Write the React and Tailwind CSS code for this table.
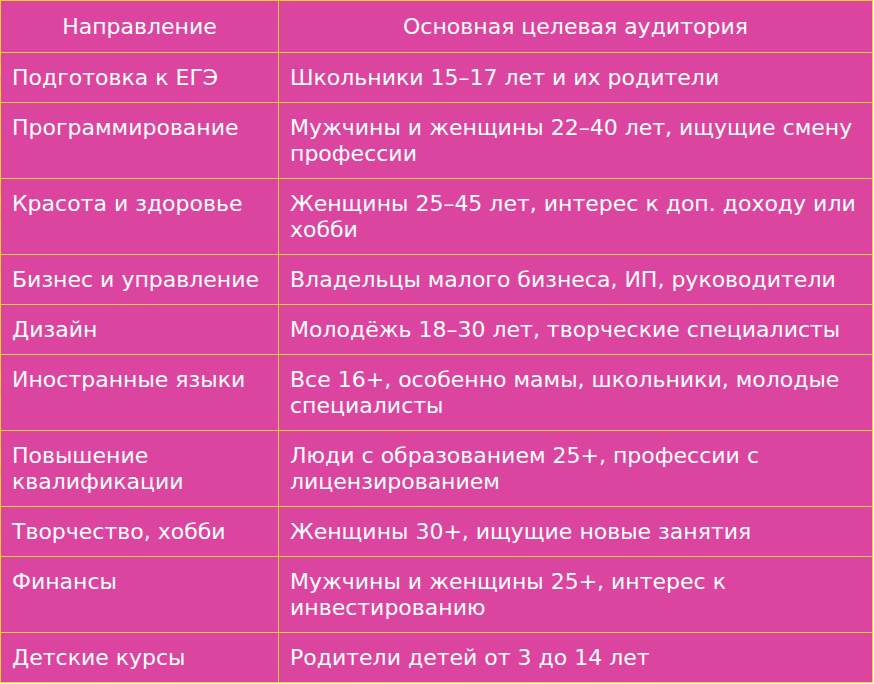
const rows = [
  ["Подготовка к ЕГЭ", ["Школьники 15–17 лет и их родители"]],
  ["Программирование", ["Мужчины и женщины 22–40 лет, ищущие смену", "профессии"]],
  ["Красота и здоровье", ["Женщины 25–45 лет, интерес к доп. доходу или", "хобби"]],
  ["Бизнес и управление", ["Владельцы малого бизнеса, ИП, руководители"]],
  ["Дизайн", ["Молодёжь 18–30 лет, творческие специалисты"]],
  ["Иностранные языки", ["Все 16+, особенно мамы, школьники, молодые", "специалисты"]],
  [["Повышение", "квалификации"], ["Люди с образованием 25+, профессии с", "лицензированием"]],
  ["Творчество, хобби", ["Женщины 30+, ищущие новые занятия"]],
  ["Финансы", ["Мужчины и женщины 25+, интерес к", "инвестированию"]],
  ["Детские курсы", ["Родители детей от 3 до 14 лет"]],
];

function Lines({ value }) {
  const list = Array.isArray(value) ? value : [value];
  return list.map((line, i) => (
    <span key={i} className="block whitespace-nowrap">
      {line}
    </span>
  ));
}

const cell = "border border-[#fbd01e] px-[11px]";

export default function App() {
  return (
    <div className="w-[874px] h-[684px] bg-white">
      <table
        className="w-[873px] border-collapse table-fixed text-white text-[22px] leading-[26px]"
        style={{ fontFamily: '"DejaVu Sans", sans-serif' }}
      >
        <colgroup>
          <col className="w-[278px]" />
          <col />
        </colgroup>
        <thead>
          <tr className="bg-[#db45a0]">
            <th className={`${cell} h-[52px] font-normal text-center`}>
              Направление
            </th>
            <th className={`${cell} h-[52px] font-normal text-center`}>
              Основная целевая аудитория
            </th>
          </tr>
        </thead>
        <tbody>
          {rows.map(([dir, aud], i) => (
            <tr key={i} className="bg-[#db45a0]">
              <td className={`${cell} pt-3 pb-[11px] align-top`}>
                <Lines value={dir} />
              </td>
              <td className={`${cell} pt-3 pb-[11px] align-top`}>
                <Lines value={aud} />
              </td>
            </tr>
          ))}
        </tbody>
      </table>
    </div>
  );
}
